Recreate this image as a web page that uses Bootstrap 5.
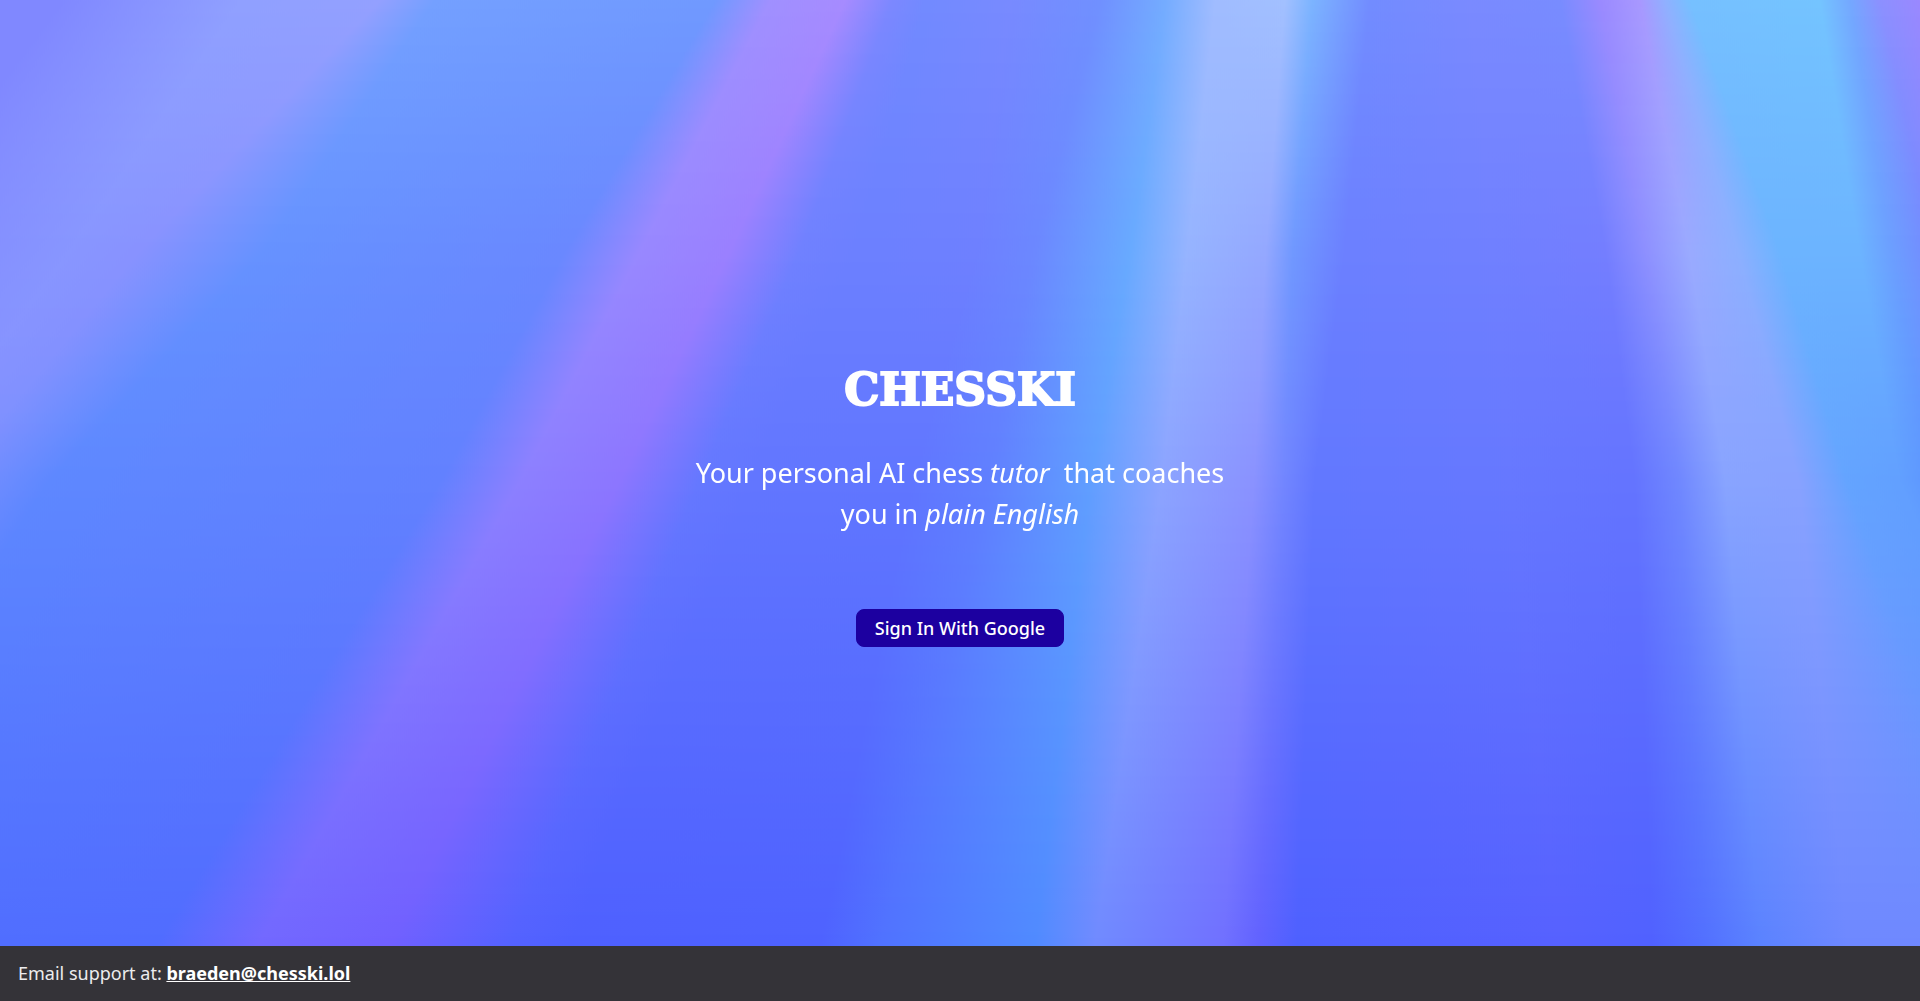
<!DOCTYPE html>
<html lang="en">
<head>
<meta charset="utf-8">
<meta name="viewport" content="width=device-width, initial-scale=1">
<title>Chesski</title>
<link href="https://cdn.jsdelivr.net/npm/bootstrap@5.3.0/dist/css/bootstrap.min.css" rel="stylesheet">
<style>
  body { font-family: "Noto Sans", sans-serif; font-size: 18px; background: #5f78ff; }
  .hero { padding-top: 64px; }
  .brand-title { font-family: "DejaVu Serif", serif; font-weight: 700; font-size: 44px; line-height: 54px; -webkit-text-stroke: 2px #fff; }
  .tagline { font-size: 27px; line-height: 41px; max-width: 560px; margin-top: 35px; margin-bottom: 75px; }
  .btn-signin { --bs-btn-color: #fff; --bs-btn-bg: #1c00a0; --bs-btn-border-color: #1c00a0;
    --bs-btn-hover-color: #fff; --bs-btn-hover-bg: #2a10b8; --bs-btn-hover-border-color: #2a10b8;
    --bs-btn-padding-x: 18px; --bs-btn-padding-y: 5px; --bs-btn-font-size: 18px; --bs-btn-line-height: 26px;
    --bs-btn-font-weight: 500; --bs-btn-border-radius: 8px; }
  .support-bar { background: #343338; color: #ececee; padding: 14px 18px; line-height: 27px; }
  .support-bar a { color: #fff; font-weight: 700; }
</style>
<script src="https://cdn.jsdelivr.net/npm/bootstrap@5.3.0/dist/js/bootstrap.bundle.min.js"></script>
</head>
<body class="d-flex flex-column min-vh-100">
<main class="hero position-relative flex-grow-1 d-flex flex-column align-items-center justify-content-center text-white text-center">
  <canvas id="rays" class="position-absolute top-0 start-0 w-100 h-100" width="1920" height="945" aria-hidden="true"></canvas>
  <h1 class="brand-title position-relative mb-0">CHESSKI</h1>
  <p class="tagline position-relative">Your personal AI chess <em>tutor</em>&nbsp; that coaches you in <em>plain English</em></p>
  <button type="button" class="btn btn-signin position-relative">Sign In With Google</button>
</main>
<footer class="support-bar">Email support at: <a href="mailto:braeden@chesski.lol">braeden@chesski.lol</a></footer>
<script>
  // Each ray edge: x and colour at the heights listed in levels; rows between are blended.
  const levels = [0, 250, 480, 945];
  const edges = [
    [60,'8088ff', -130,'8088ff', -400,'8088ff', -800,'7080ff'],
    [240,'90a0ff', 70,'8896ff', -100,'8490ff', -500,'7080ff'],
    [380,'93a0ff', 140,'8892ff', -50,'7c90ff', -400,'6078ff'],
    [435,'74a0ff', 265,'6692ff', 50,'5e88ff', -250,'5070ff'],
    [715,'7099ff', 565,'6a88ff', 440,'6281ff', 155,'506cff'],
    [770,'a090ff', 640,'9888ff', 520,'8c80ff', 257,'7268ff'],
    [845,'a68bff', 730,'9a80ff', 620,'8c76ff', 390,'7060ff'],
    [892,'7c88ff', 800,'7081ff', 700,'6578ff', 510,'5462ff'],
    [925,'728aff', 860,'6c80ff', 760,'6276ff', 570,'4e60ff'],
    [1010,'788aff', 975,'6e80ff', 910,'6076ff', 820,'4e62ff'],
    [1100,'7090ff', 1035,'6c88ff', 990,'6080ff', 880,'5072ff'],
    [1165,'74acff', 1130,'68aaff', 1090,'609eff', 1035,'508aff'],
    [1215,'a0bcff', 1187,'96b4ff', 1162,'8ca4ff', 1095,'708aff'],
    [1285,'a2c0ff', 1266,'94a8ff', 1254,'8a92ff', 1223,'7070ff'],
    [1312,'7cb4ff', 1293,'7098ff', 1284,'7286ff', 1258,'6262ff'],
    [1370,'728cff', 1345,'6c80ff', 1315,'6278ff', 1297,'4e60ff'],
    [1470,'7a8aff', 1493,'7080ff', 1511,'6678ff', 1560,'5661ff'],
    [1560,'788cff', 1605,'747eff', 1634,'6474ff', 1652,'5061ff'],
    [1600,'9a8aff', 1646,'8e90ff', 1680,'7088ff', 1705,'5270ff'],
    [1640,'a898ff', 1689,'9aaaff', 1725,'88a4ff', 1760,'5a82ff'],
    [1665,'90b0ff', 1738,'8cb0ff', 1799,'88a2ff', 1848,'6e88ff'],
    [1690,'76c0ff', 1780,'6cb4ff', 1847,'64a4ff', 2000,'7088ff'],
    [1820,'74c4ff', 1860,'6cb4ff', 1900,'62a0ff', 2100,'6088ff'],
    [1850,'74a8ff', 1890,'6ca0ff', 1935,'5c94ff', 2200,'5880ff'],
    [1880,'8c90ff', 1935,'7488ff', 2000,'7080ff', 2300,'5880ff'],
    [1920,'9a88ff', 1990,'9080ff', 2080,'8078ff', 2400,'5880ff']
  ];
  const rgb = h => [0, 2, 4].map(i => parseInt(h.slice(i, i + 2), 16));
  const canvas = document.getElementById('rays');
  const ctx = canvas.getContext('2d');
  const left = -900, span = 3400;
  for (let y = 0; y < canvas.height; y++) {
    let k = 0;
    while (k < levels.length - 2 && y >= levels[k + 1]) k++;
    const t = (y - levels[k]) / (levels[k + 1] - levels[k]);
    const g = ctx.createLinearGradient(left, 0, left + span, 0);
    for (const e of edges) {
      const x = e[2 * k] + (e[2 * k + 2] - e[2 * k]) * t;
      const a = rgb(e[2 * k + 1]), b = rgb(e[2 * k + 3]);
      g.addColorStop((x - left) / span, 'rgb(' + a.map((v, i) => Math.round(v + (b[i] - v) * t)).join(',') + ')');
    }
    ctx.fillStyle = g;
    ctx.fillRect(0, y, canvas.width, 1);
  }
</script>
</body>
</html>
